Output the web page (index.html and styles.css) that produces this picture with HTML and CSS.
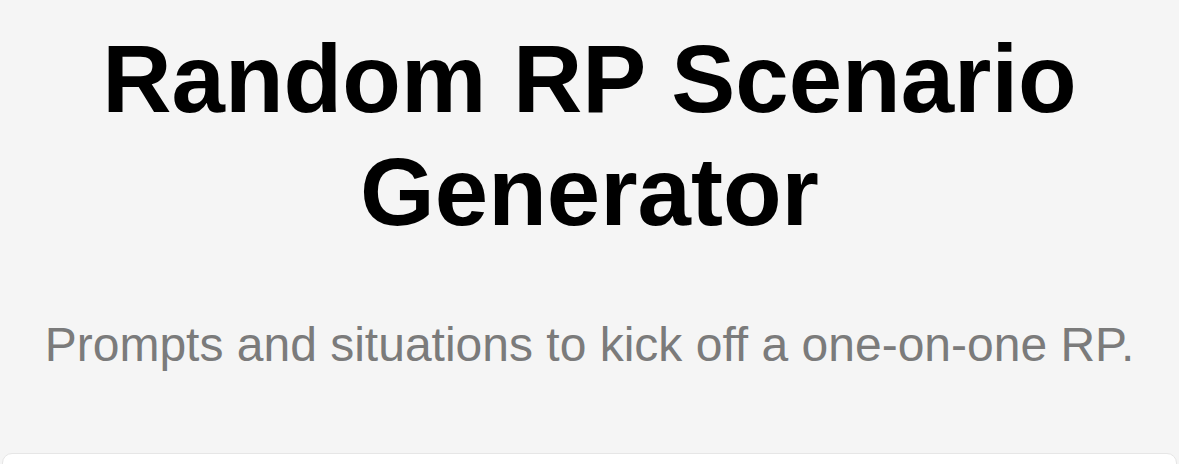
FILE: index.html
```html
<!DOCTYPE html>
<html lang="en">
<head>
<meta charset="utf-8">
<title>Random RP Scenario Generator</title>
<link rel="stylesheet" href="styles.css">
</head>
<body>
  <main class="page">
    <header class="hero">
      <h1 class="hero-title">Random RP Scenario Generator</h1>
      <p class="hero-sub">Prompts and situations to kick off a one-on-one RP.</p>
    </header>
    <section class="card"></section>
  </main>
</body>
</html>
```
FILE: styles.css
```css
html, body {
  margin: 0;
  padding: 0;
  background: #f5f5f5;
}

body {
  font-family: "Liberation Sans", Arial, Helvetica, sans-serif;
  color: #000;
  overflow: hidden;
  height: 464px;
}

.page {
  display: flex;
  flex-direction: column;
  align-items: stretch;
  padding: 0 2px;
}

.hero {
  display: flex;
  flex-direction: column;
  align-items: center;
  text-align: center;
  padding-top: 22px;
}

.hero-title {
  margin: 0;
  font-size: 96px;
  font-weight: 700;
  line-height: 113px;
  max-width: 1000px;
}

.hero-sub {
  margin: 69px 0 0;
  font-size: 48px;
  line-height: 56px;
  color: #7b7b7b;
}

.card {
  margin-top: 80px;
  height: 300px;
  background: #fff;
  border: 1px solid #e6e6e6;
  border-radius: 10px;
}
```
